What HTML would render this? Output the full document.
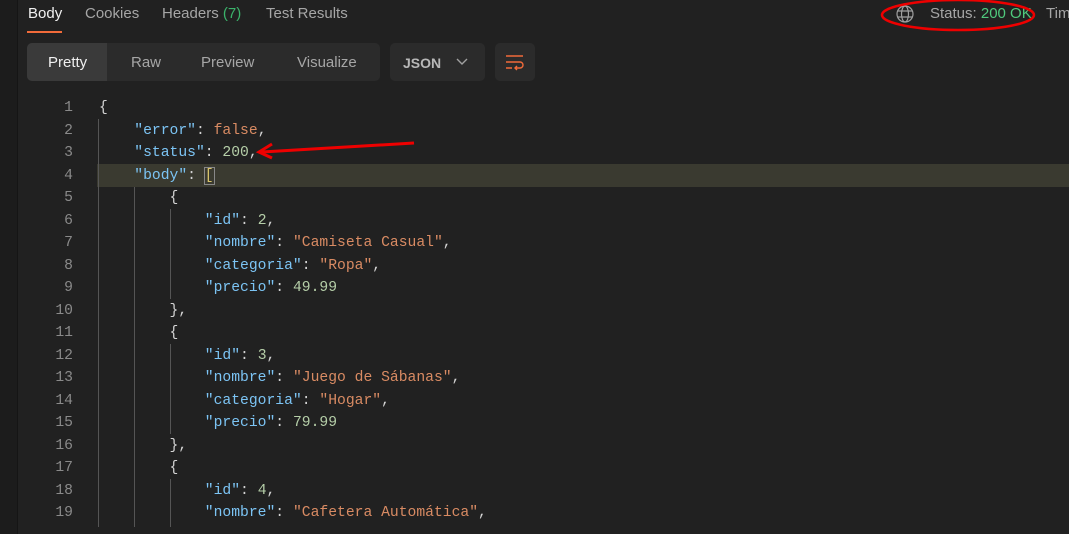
<!DOCTYPE html>
<html><head><meta charset="utf-8"><style>
*{margin:0;padding:0;box-sizing:border-box}
body{width:1069px;height:534px;background:#212121;position:relative;overflow:hidden;font-family:"Liberation Sans",sans-serif}
.abs{position:absolute}
.tab{position:absolute;top:5px;font-size:15px;color:#a6a6a6}
.seg{position:absolute;top:43px;height:38px;background:#2b2b2b;border-radius:5px}
.code{position:absolute;font-family:"Liberation Mono",monospace;font-size:14.7px;white-space:pre;color:#d4d4d4}
.ln{position:absolute;left:0;width:73px;text-align:right;color:#8a8a8a;font-family:"Liberation Mono",monospace;font-size:14.7px}
.k{color:#7cc4f4}.s{color:#d98b63}.n{color:#b5cea8}.b{color:#d4d4d4}
.g{position:absolute;width:1px;background:#555}
</style></head><body>
<div class="abs" style="left:0;top:0;width:17px;height:534px;background:#1c1c1c"></div>
<div class="abs" style="left:17px;top:0;width:1px;height:534px;background:#151515"></div>
<div class="tab" style="left:28px;color:#f0f0f0">Body</div>
<div class="abs" style="left:27px;top:31px;width:35px;height:2px;background:#f26b3a"></div>
<div class="tab" style="left:85px">Cookies</div>
<div class="tab" style="left:162px">Headers <span style="color:#3bb36b">(7)</span></div>
<div class="tab" style="left:266px">Test Results</div>
<svg class="abs" style="left:895px;top:4px" width="20" height="20" viewBox="0 0 20 20" fill="none" stroke="#a0a0a0" stroke-width="1.2"><circle cx="10" cy="10" r="8"/><ellipse cx="10" cy="10" rx="3.5" ry="8"/><path d="M2.5 7h15M2.5 13h15"/></svg>
<div class="tab" style="left:930px">Status: <span style="color:#4fc97d">200 OK</span></div>
<div class="tab" style="left:1046px">Tim</div>
<svg class="abs" style="left:880px;top:0" width="160" height="34"><ellipse cx="78" cy="15" rx="76" ry="15" fill="none" stroke="#e00" stroke-width="2.5"/></svg>
<div class="seg" style="left:27px;width:353px"></div>
<div class="abs" style="left:27px;top:43px;width:80px;height:38px;background:#3a3a3a;border-radius:5px 0 0 5px"></div>
<div class="tab" style="left:48px;top:54px;color:#f0f0f0">Pretty</div>
<div class="tab" style="left:131px;top:54px">Raw</div>
<div class="tab" style="left:201px;top:54px">Preview</div>
<div class="tab" style="left:297px;top:54px">Visualize</div>
<div class="seg" style="left:390px;width:95px"></div>
<div class="tab" style="left:403px;top:55px;font-size:14px;font-weight:bold;color:#b8b8b8">JSON</div>
<svg class="abs" style="left:455px;top:56px" width="14" height="12"><path d="M2 3l5 5 5-5" stroke="#a0a0a0" stroke-width="1.4" fill="none"/></svg>
<div class="seg" style="left:495px;width:40px"></div>
<svg class="abs" style="left:503px;top:51px" width="24" height="24" fill="none" stroke="#f26b3a" stroke-width="1.4"><path d="M3 5h17M3 11h14a3 3 0 0 1 0 6h-5M14 15l-2 2 2 2M3 17h6"/></svg>
<div class="abs" style="left:97px;top:164px;width:972px;height:23px;background:#3a3a30"></div>
<div class="g" style="left:98px;top:119px;height:408px"></div>
<div class="g" style="left:134px;top:187px;height:340px"></div>
<div class="g" style="left:170px;top:209px;height:90px"></div>
<div class="g" style="left:170px;top:344px;height:90px"></div>
<div class="g" style="left:170px;top:479px;height:48px"></div>
<svg class="abs" style="left:250px;top:136px" width="170" height="30"><path d="M164 7L12 16" stroke="#e00" stroke-width="3"/><path d="M22 8L9 16L22 22" stroke="#e00" stroke-width="3" fill="none"/></svg>
<div id="c"></div>
<script>
var L=['<span class="b">{</span>',
'    <span class="k">"error"</span>: <span class="s">false</span>,',
'    <span class="k">"status"</span>: <span class="n">200</span>,',
'    <span class="k">"body"</span>: <span style="outline:1px solid #888;color:#d9c46b">[</span>',
'        <span class="b">{</span>',
'            <span class="k">"id"</span>: <span class="n">2</span>,',
'            <span class="k">"nombre"</span>: <span class="s">"Camiseta Casual"</span>,',
'            <span class="k">"categoria"</span>: <span class="s">"Ropa"</span>,',
'            <span class="k">"precio"</span>: <span class="n">49.99</span>',
'        <span class="b">}</span>,',
'        <span class="b">{</span>',
'            <span class="k">"id"</span>: <span class="n">3</span>,',
'            <span class="k">"nombre"</span>: <span class="s">"Juego de Sábanas"</span>,',
'            <span class="k">"categoria"</span>: <span class="s">"Hogar"</span>,',
'            <span class="k">"precio"</span>: <span class="n">79.99</span>',
'        <span class="b">}</span>,',
'        <span class="b">{</span>',
'            <span class="k">"id"</span>: <span class="n">4</span>,',
'            <span class="k">"nombre"</span>: <span class="s">"Cafetera Automática"</span>,'];
var h='';for(var i=0;i<L.length;i++){var t=100+i*22.5;h+='<div class="ln" style="top:'+t+'px">'+(i+1)+'</div><div class="code" style="left:99px;top:'+t+'px">'+L[i]+'</div>';}
document.getElementById('c').innerHTML=h;
</script>
</body></html>
